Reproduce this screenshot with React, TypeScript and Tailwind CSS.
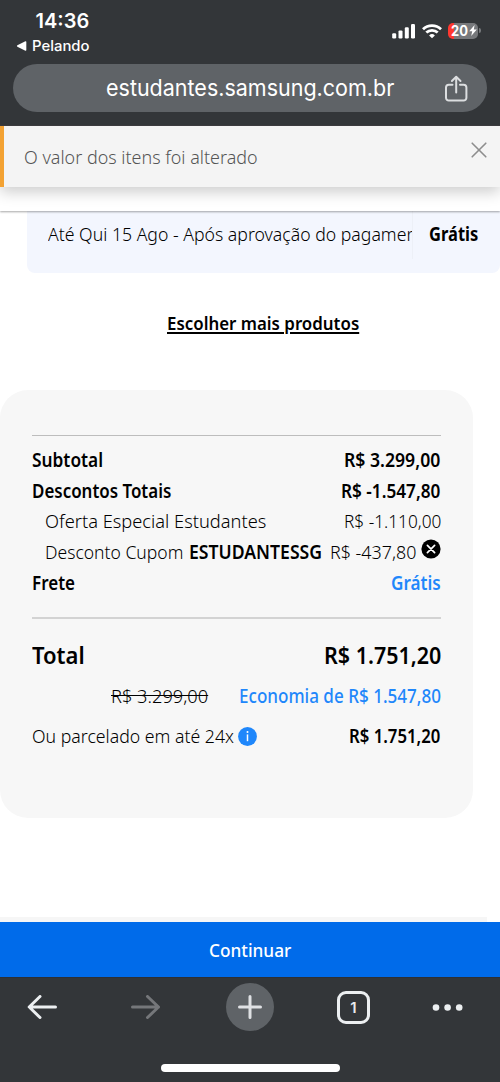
import { useLayoutEffect, useRef, useState } from "react";
import type { ReactNode } from "react";

/* Condenses or widens a line of text so that it fills a given width. */
function Fit({ w, className = "", children }: { w: number; className?: string; children: ReactNode }) {
  const ref = useRef<HTMLSpanElement>(null);
  const [scale, setScale] = useState(1);
  useLayoutEffect(() => {
    if (ref.current) setScale(w / ref.current.offsetWidth);
  }, [w]);
  return (
    <span className="block shrink-0 leading-[0] whitespace-nowrap" style={{ width: w }}>
      <span ref={ref} className={`inline-block origin-left align-top ${className}`} style={{ transform: `scaleX(${scale})` }}>
        {children}
      </span>
    </span>
  );
}

function StatusBar() {
  return (
    <div className="flex h-16 justify-between pl-4 pr-[19px] font-['Inter',sans-serif] text-white">
      <div className="pt-[9px]">
        <div className="pl-[19.5px]">
          <Fit w={54} className="text-[20px] leading-6 font-semibold">14:36</Fit>
        </div>
        <div className="flex items-center gap-[5px] pt-[3px]">
          <svg className="h-[10px] w-[11px]" viewBox="0 0 11 10" fill="#fff">
            <path d="M1.4 4.3 9.4.3Q10.3 0 10.3 1v8q0 1-.9.7L1.4 5.7Q.3 5 1.4 4.3Z" />
          </svg>
          <Fit w={57.5} className="text-[14.5px] leading-5 font-medium">Pelando</Fit>
        </div>
      </div>
      <div className="mt-[22px] flex h-[17px] items-center gap-[6px]">
        <svg className="h-4 w-6" viewBox="0 0 24 16" fill="#fff">
          <rect x="0.2" y="10.3" width="4" height="5.2" rx="1.2" />
          <rect x="6.5" y="7.4" width="4" height="8.1" rx="1.2" />
          <rect x="12.8" y="4.2" width="4" height="11.3" rx="1.2" />
          <rect x="19" y="1" width="4" height="14.5" rx="1.2" />
        </svg>
        <svg className="h-4 w-5" viewBox="0 0 20 16" fill="none" stroke="#fff" strokeWidth="2.8">
          <path d="M1 6.2a13 13 0 0 1 18 0" />
          <path d="M4.3 9.6a8.3 8.3 0 0 1 11.4 0" />
          <path d="M10 15.3 7.1 12.4a4.2 4.2 0 0 1 5.8 0Z" fill="#fff" stroke="none" />
        </svg>
        <div className="flex items-center gap-px">
          <div className="flex h-4 w-[30px] items-center rounded-[5px] bg-[linear-gradient(90deg,#ff3830_6px,#77797c_6px)] pl-[2.5px]">
            <Fit w={17} className="text-[14.5px] leading-4 font-bold">20</Fit>
            <svg className="ml-px h-[11px] w-2" viewBox="0 0 8 11" fill="#fff">
              <path d="M5.6 0 .2 6.3h3L2.2 11 7.8 4.6h-3Z" />
            </svg>
          </div>
          <div className="h-[5px] w-[2px] rounded-r-full bg-[#77797c]" />
        </div>
      </div>
    </div>
  );
}

function AddressBar() {
  return (
    <div className="mx-[13px] flex h-12 items-center justify-between rounded-full bg-[#5f6367] pr-[19px] pl-[93px] font-['Inter',sans-serif] text-white">
      <Fit w={288.5} className="text-[22.5px] leading-[46px] font-normal">estudantes.samsung.com.br</Fit>
      <svg className="mt-[2px] h-[28px] w-[24px]" viewBox="0 0 24 28" fill="none" stroke="#dcdee0" strokeWidth="2" strokeLinecap="round" strokeLinejoin="round">
        <path d="M8.5 9.7H4.8a2.8 2.8 0 0 0-2.8 2.8v10.2a2.8 2.8 0 0 0 2.8 2.8h14.8a2.8 2.8 0 0 0 2.8-2.8V12.5a2.8 2.8 0 0 0-2.8-2.8H16" />
        <path d="M12.2 17.5V2M7.9 6l4.3-4.2L16.5 6" />
      </svg>
    </div>
  );
}

function Notice() {
  return (
    <div className="relative z-10 flex h-[61px] justify-between border-l-4 border-[#f3a233] bg-[#f4f4f4] pr-[13.5px] pl-5 shadow-[0_5px_14px_rgba(0,0,0,0.2)]">
      <Fit w={234} className="text-[19px] leading-[62px] font-[360] text-[#555]">O valor dos itens foi alterado</Fit>
      <svg className="mt-[16px] h-4 w-4" viewBox="0 0 16 16" stroke="#8d8d8d" strokeWidth="1.6" strokeLinecap="round">
        <path d="m1.200 1.200 13.600 13.600M14.800 1.200 1.200 14.800" />
      </svg>
    </div>
  );
}

function Row({ children, className = "" }: { children: ReactNode; className?: string }) {
  return <div className={`flex items-center justify-between ${className}`}>{children}</div>;
}

const strong = "text-[19px] leading-[30px] font-semibold";
const light = "text-[19px] leading-[30px] font-[360]";

function Summary() {
  return (
    <section className="mt-[54px] h-[428px] w-[473px] rounded-[28px] bg-[#f7f7f7] pt-[45px] pr-8 pl-8">
      <div className="h-px bg-[#bdbdbd]" />
      <div className="pt-[9px] pr-[0.5px]">
        <Row className="h-[30.6px]">
          <Fit w={71} className={strong}>Subtotal</Fit>
          <Fit w={96.5} className={strong}>R$ 3.299,00</Fit>
        </Row>
        <Row className="h-[30.6px]">
          <Fit w={139} className={strong}>Descontos Totais</Fit>
          <Fit w={99.5} className={strong}>R$ -1.547,80</Fit>
        </Row>
        <Row className="h-[30.6px] pl-[13px]">
          <Fit w={221} className={light}>Oferta Especial Estudantes</Fit>
          <Fit w={97} className={light}>R$ -1.110,00</Fit>
        </Row>
        <Row className="h-[30.6px] pl-[13px]">
          <div className="flex gap-[5px]">
            <Fit w={138.5} className={light}>Desconto Cupom</Fit>
            <Fit w={133.5} className={strong}>ESTUDANTESSG</Fit>
          </div>
          <div className="flex gap-[4.5px]">
            <Fit w={86.5} className={light}>R$ -437,80</Fit>
            <svg className="mt-[1.5px] h-5 w-5" viewBox="0 0 20 20">
              <circle cx="10" cy="10" r="9.6" fill="#000" />
              <path d="m6.4 6.4 7.2 7.2M13.6 6.4l-7.2 7.2" stroke="#fff" strokeWidth="1.7" strokeLinecap="round" />
            </svg>
          </div>
        </Row>
        <Row className="h-[30.6px]">
          <Fit w={43} className={strong}>Frete</Fit>
          <Fit w={49.5} className="text-[19px] leading-[30px] font-semibold text-[#1f87fb]">Grátis</Fit>
        </Row>
      </div>
      <div className="mt-[19px] h-[2px] bg-[#d3d3d3]" />
      <div className="pt-4 pr-[0.5px]">
        <Row className="h-[41px]">
          <Fit w={52.5} className="text-[23.5px] leading-10 font-semibold">Total</Fit>
          <Fit w={117} className="text-[23.5px] leading-10 font-semibold">R$ 1.751,20</Fit>
        </Row>
        <Row className="h-10 pl-[79px]">
          <Fit w={97} className="text-[19px] leading-10 font-[360] line-through">R$ 3.299,00</Fit>
          <Fit w={202} className="text-[19px] leading-10 font-medium text-[#1f87fb]">Economia de R$ 1.547,80</Fit>
        </Row>
        <Row className="h-10">
          <div className="flex items-center gap-[4px]">
            <Fit w={202} className="text-[19px] leading-10 font-[360]">Ou parcelado em até 24x</Fit>
            <svg className="mt-[2px] h-[19px] w-[19px]" viewBox="0 0 19 19">
              <circle cx="9.5" cy="9.5" r="9.4" fill="#1f87fb" />
              <circle cx="9.5" cy="4.9" r="1" fill="#fff" />
              <path d="M9.5 7.400v6.800" stroke="#fff" strokeWidth="1.5" />
            </svg>
          </div>
          <Fit w={91.5} className="text-[19px] leading-10 font-semibold">R$ 1.751,20</Fit>
        </Row>
      </div>
    </section>
  );
}

function BrowserToolbar() {
  return (
    <footer className="flex h-[105px] shrink-0 flex-col items-center border-t border-[#2b3037] bg-[#333639] text-[#e8eaed]">
      <div className="flex h-[58px] w-full items-center pl-[27px]">
        <svg className="h-6 w-[31px]" viewBox="0 0 31 24" fill="none" stroke="#eceff1" strokeWidth="3" strokeLinecap="round" strokeLinejoin="round">
          <path d="M28.500 12H2.500M13 1.500 2.200 12 13 22.500" />
        </svg>
        <svg className="ml-[72px] h-6 w-[31px]" viewBox="0 0 31 24" fill="none" stroke="#75777a" strokeWidth="3" strokeLinecap="round" strokeLinejoin="round">
          <path d="M2.500 12h26M17.500 1.500 28.500 12l-11 10.500" />
        </svg>
        <div className="ml-[65px] flex h-12 w-12 items-center justify-center rounded-full bg-[#5f6367]">
          <svg className="h-6 w-6" viewBox="0 0 24 24" stroke="#dfe1e4" strokeWidth="3" strokeLinecap="round">
            <path d="M12 1.500v21M1.500 12h21" />
          </svg>
        </div>
        <div className="ml-[63px] flex h-[33px] w-[33px] items-center justify-center rounded-[9px] border-[3px] border-[#eceff1] font-['Inter',sans-serif] text-[15px] leading-none font-semibold">1</div>
        <svg className="ml-[62px] h-[7px] w-[31px]" viewBox="0 0 31 7" fill="#eceff1">
          <circle cx="4" cy="3.500" r="3.300" />
          <circle cx="15.600" cy="3.500" r="3.300" />
          <circle cx="27.200" cy="3.500" r="3.300" />
        </svg>
      </div>
      <div className="mt-[28px] h-2 w-[179px] rounded-full bg-white" />
    </footer>
  );
}

export default function App() {
  return (
    <div className="flex h-[1082px] w-[500px] flex-col overflow-hidden bg-white font-['Noto_Sans',sans-serif] text-black">
      <header className="relative z-20 h-[126px] shrink-0 border-b border-[#3c3b3e] bg-[#333639]">
        <StatusBar />
        <AddressBar />
      </header>
      <Notice />
      <div className="relative h-6 shrink-0 bg-white shadow-[0_1px_2px_rgba(0,0,0,0.35)]" />
      <main className="flex flex-1 flex-col">
        <div className="ml-[27px] flex h-[62px] justify-between rounded-b-[8px] bg-[#f3f6fe] pr-[22px] pl-[21px]">
          <div className="h-12 w-[365px] overflow-hidden border-r border-[#edf0f7]">
            <Fit w={369} className="text-[19px] leading-[46px] font-[360]">Até Qui 15 Ago - Após aprovação do pagamen</Fit>
          </div>
          <Fit w={49.5} className="text-[19px] leading-[46px] font-bold">Grátis</Fit>
        </div>
        <a className="mt-[36.5px] flex h-[26.5px] justify-center pl-[26px]">
          <Fit w={192.5} className="text-[18.5px] leading-[26px] font-semibold underline decoration-[1.5px] underline-offset-[2px]">Escolher mais produtos</Fit>
        </a>
        <Summary />
      </main>
      <div className="h-[5px] w-[486.5px] shrink-0 bg-[#f6f6f6]" />
      <button className="flex h-[55px] shrink-0 items-center justify-center bg-[#006bea] text-white">
        <Fit w={82} className="text-[18.5px] leading-[55px] font-medium">Continuar</Fit>
      </button>
      <BrowserToolbar />
    </div>
  );
}
